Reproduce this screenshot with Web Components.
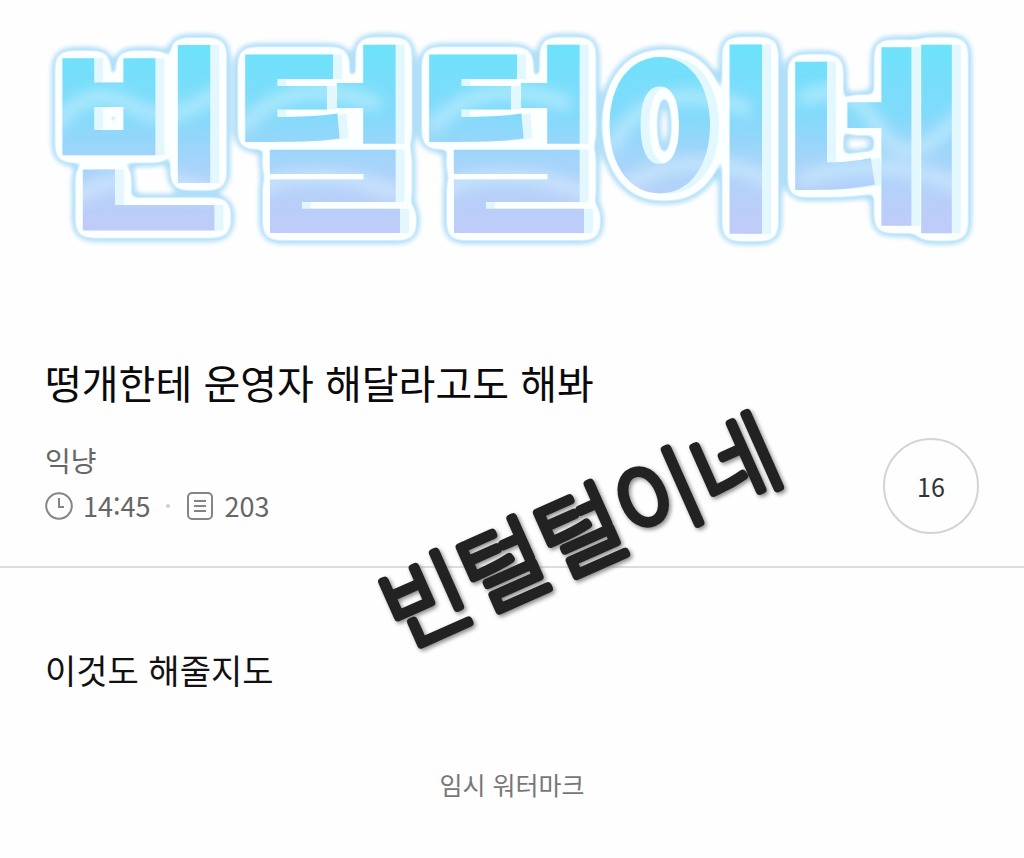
<!DOCTYPE html>
<html lang="ko">
<head>
<meta charset="utf-8">
<meta name="viewport" content="width=device-width, initial-scale=1">
<title>떵개한테 운영자 해달라고도 해봐</title>
<style>
    body { margin: 0; background: #fefefe; color: #111; font-family: "Noto Sans CJK KR", sans-serif; }
</style>
</head>
<body>
<post-page>
    <ice-banner slot="banner" text="빈털털이네"></ice-banner>
    <post-header slot="header" author="익냥" time="14:45" views="203" comments="16">떵개한테 운영자 해달라고도 해봐</post-header>
    <tilted-mark slot="mark" text="빈털털이네"></tilted-mark>
    <post-body slot="body">이것도 해줄지도</post-body>
    <span slot="footer">임시 워터마크</span>
</post-page>

<script>
class PostPage extends HTMLElement {
    constructor() {
        super();
        this.attachShadow({ mode: 'open' });
        this.shadowRoot.innerHTML = `
            <style>
                :host { display: block; position: relative; }
                footer { padding: 44px 0 52px; text-align: center; font-size: 25px; line-height: 40px; color: #777; }
            </style>
            <slot name="banner"></slot>
            <main>
                <slot name="header"></slot>
                <slot name="body"></slot>
            </main>
            <footer><slot name="footer"></slot></footer>
            <slot name="mark"></slot>
        `;
    }
}

class IceBanner extends HTMLElement {
    constructor() {
        super();
        this.attachShadow({ mode: 'open' });
        this.shadowRoot.innerHTML = `
            <style>
                :host { display: block; }
                h1 { margin: 0; }
                svg { display: block; width: 100%; }
                text { font-family: "Liberation Sans", "Noto Sans CJK KR", sans-serif; font-size: 200px; font-weight: 900; }
            </style>
            <h1><svg viewBox="0 0 1024 280">
                <defs>
                    <linearGradient id="ice" gradientUnits="userSpaceOnUse" x1="0" y1="50" x2="0" y2="230">
                        <stop offset="0" stop-color="#6ee2fb"/>
                        <stop offset=".35" stop-color="#80dafb"/>
                        <stop offset=".6" stop-color="#a2d4fa"/>
                        <stop offset=".8" stop-color="#b6d0f9"/>
                        <stop offset="1" stop-color="#bfcbf8"/>
                    </linearGradient>
                    <filter id="soft"><feGaussianBlur stdDeviation="7"/></filter>
                    <pattern id="clouds" patternUnits="userSpaceOnUse" width="1024" height="280">
                        <rect width="1024" height="280" fill="url(#ice)"/>
                        <g fill="none" stroke="#e2f6ff" stroke-width="14" opacity=".5" filter="url(#soft)">
                            <path d="M50 130Q90 80 130 105T220 90"/>
                            <path d="M70 200Q130 160 220 195"/>
                            <path d="M240 130Q290 70 380 105"/>
                            <path d="M250 190Q320 160 400 195"/>
                            <path d="M430 130Q480 70 570 105"/>
                            <path d="M440 190Q510 160 590 195"/>
                            <path d="M610 150Q650 70 750 110"/>
                            <path d="M620 190Q690 140 780 185"/>
                            <path d="M800 100Q850 75 880 130T980 90"/>
                            <path d="M800 180Q880 150 970 190"/>
                        </g>
                    </pattern>
                    <filter id="rim" filterUnits="userSpaceOnUse" x="0" y="0" width="1024" height="280" color-interpolation-filters="sRGB">
                        <feOffset in="SourceAlpha" dx="9" dy="0" result="side"/>
                        <feFlood flood-color="#e3f8fe"/>
                        <feComposite in2="side" operator="in" result="depth"/>
                        <feMerge>
                            <feMergeNode in="SourceAlpha"/>
                            <feMergeNode in="side"/>
                        </feMerge>
                        <feGaussianBlur stdDeviation="6"/>
                        <feComponentTransfer result="inner"><feFuncA type="linear" slope="16" intercept="-1"/></feComponentTransfer>
                        <feFlood flood-color="#fbffff"/>
                        <feComposite in2="inner" operator="in" result="white"/>
                        <feGaussianBlur in="inner" stdDeviation="4"/>
                        <feComponentTransfer><feFuncA type="linear" slope="8" intercept="-1"/></feComponentTransfer>
                        <feGaussianBlur stdDeviation="2" result="outer"/>
                        <feFlood flood-color="#b2dff8"/>
                        <feComposite in2="outer" operator="in" result="blue"/>
                        <feMerge>
                            <feMergeNode in="blue"/>
                            <feMergeNode in="white"/>
                            <feMergeNode in="depth"/>
                            <feMergeNode in="SourceGraphic"/>
                        </feMerge>
                    </filter>
                </defs>
                <text x="506" y="214" text-anchor="middle" fill="url(#clouds)" filter="url(#rim)"></text>
            </svg></h1>
        `;
    }

    connectedCallback() {
        this.shadowRoot.querySelector('text').textContent = this.getAttribute('text');
    }
}

class PostHeader extends HTMLElement {
    constructor() {
        super();
        this.attachShadow({ mode: 'open' });
        this.shadowRoot.innerHTML = `
            <style>
                :host { display: block; padding: 74px 45px 32px; border-bottom: 2px solid #dcdcdc; }
                h2 { margin: 0; font-size: 40px; line-height: 56px; font-weight: 400; color: #0a0a0a; }
                .row { display: flex; align-items: center; justify-content: space-between; margin-top: 28px; }
                .info { color: #666; line-height: 48px; }
                .author { font-size: 28px; line-height: 44px; }
                .meta { display: flex; align-items: center; padding-bottom: 4px; font-size: 27px; }
                .meta svg { width: 28px; height: 28px; margin-right: 10px; fill: none; stroke: #858585; stroke-width: 2; }
                .dot { width: 4px; height: 4px; margin: 0 16px; border-radius: 50%; background: #d0d0d0; }
                button { width: 96px; height: 96px; padding: 0; border: 2px solid #d4d4d4; border-radius: 50%; background: none; color: #333; font: inherit; font-size: 25px; }
            </style>
            <h2><slot></slot></h2>
            <div class="row">
                <div class="info">
                    <div class="author"></div>
                    <div class="meta">
                        <svg viewBox="0 0 28 28"><circle cx="14" cy="14" r="12.8"/><path d="M14 6v9h5"/></svg>
                        <time></time>
                        <span class="dot"></span>
                        <svg viewBox="0 0 28 28"><rect x="2" y="1" width="24" height="26" rx="4"/><path d="M8 9h12M8 14h12M8 19h12"/></svg>
                        <span class="views"></span>
                    </div>
                </div>
                <button type="button" aria-label="댓글"></button>
            </div>
        `;
    }

    connectedCallback() {
        const shadow = this.shadowRoot;
        shadow.querySelector('.author').textContent = this.getAttribute('author');
        shadow.querySelector('time').textContent = this.getAttribute('time');
        shadow.querySelector('.views').textContent = this.getAttribute('views');
        shadow.querySelector('button').textContent = this.getAttribute('comments');
    }
}

class PostBody extends HTMLElement {
    constructor() {
        super();
        this.attachShadow({ mode: 'open' });
        this.shadowRoot.innerHTML = `
            <style>
                :host { display: block; padding: 76px 45px 24px; font-size: 34px; line-height: 52px; }
                p { margin: 0; }
            </style>
            <p><slot></slot></p>
        `;
    }
}

// stamp laid across the post, over the divider
class TiltedMark extends HTMLElement {
    constructor() {
        super();
        this.attachShadow({ mode: 'open' });
        this.shadowRoot.innerHTML = `
            <style>
                :host { position: absolute; left: 340px; top: 380px; pointer-events: none; }
                svg { display: block; overflow: visible; filter: drop-shadow(2px 2px 2px #888); }
                text {
                    font-family: "Noto Sans CJK KR", sans-serif; font-size: 92px; font-weight: 100;
                    fill: #222; stroke: #222; stroke-width: 8px; stroke-linejoin: round;
                }
            </style>
            <svg width="480" height="300" viewBox="0 0 480 300">
                <text x="240" y="186" text-anchor="middle" transform="rotate(-24 240 150)"></text>
            </svg>
        `;
    }

    connectedCallback() {
        this.shadowRoot.querySelector('text').textContent = this.getAttribute('text');
    }
}

customElements.define('post-page', PostPage);
customElements.define('ice-banner', IceBanner);
customElements.define('post-header', PostHeader);
customElements.define('post-body', PostBody);
customElements.define('tilted-mark', TiltedMark);
</script>
</body>
</html>
